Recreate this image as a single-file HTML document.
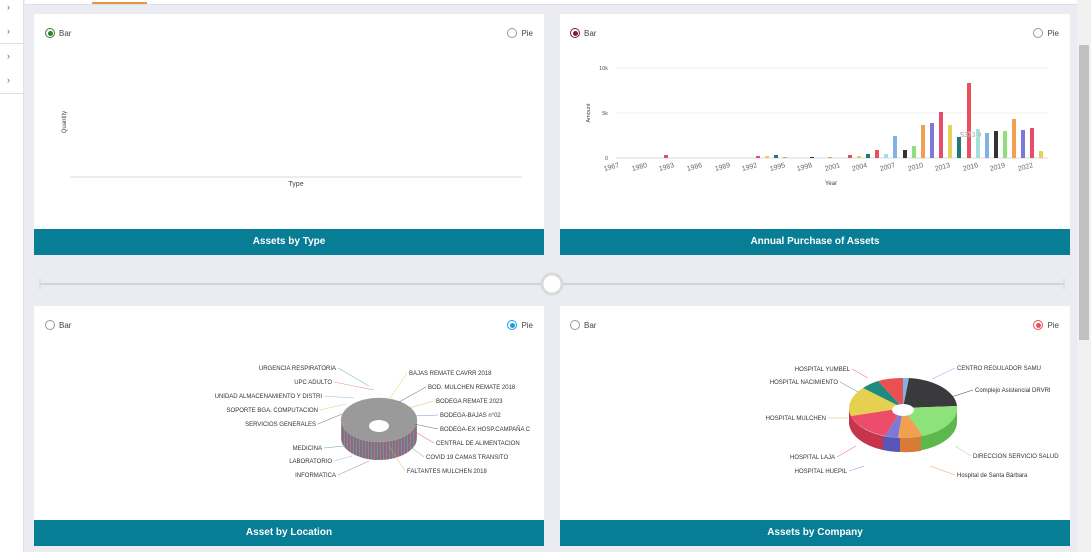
<!DOCTYPE html>
<html><head><meta charset="utf-8"><style>
*{margin:0;padding:0;box-sizing:border-box}
body{width:1091px;height:552px;overflow:hidden;background:#eaecf1;font-family:"Liberation Sans",sans-serif;position:relative}
.side{position:absolute;left:0;top:0;width:24px;height:552px;background:#fff;border-right:1px solid #dde0e5}
.side div{position:absolute;left:7px;font-size:9px;color:#666}
.top{position:absolute;left:25px;top:0;width:1052px;height:5px;background:#fff;border-bottom:1px solid #dde}
.top i{position:absolute;left:67px;top:2px;width:55px;height:2px;background:#e8963f}
.card{position:absolute;background:#fff;width:510px}
.hdr{position:absolute;left:0;bottom:0;width:100%;height:26px;background:#077d96;color:#fff;font-size:10px;font-weight:bold;text-align:center;line-height:26px}
.rad{position:absolute;top:14px;font-size:8px;color:#444;display:flex;align-items:center}
.rad b{display:inline-block;width:10px;height:10px;border:1px solid #999;border-radius:50%;margin-right:4px;position:relative}
.rad b.on:after{content:"";position:absolute;left:1.5px;top:1.5px;width:5px;height:5px;border-radius:50%;background:var(--c)}
.sb{position:absolute;left:1077px;top:0;width:14px;height:552px;background:#f1f1f1}
.sb i{position:absolute;left:2px;top:45px;width:10px;height:295px;background:#c1c1c1}
svg text{font-family:"Liberation Sans",sans-serif}
</style></head><body>
<div class="side"><div style="top:2px">›</div><div style="top:26px">›</div><div style="top:51px">›</div><div style="top:75px">›</div>
<div style="left:0;top:43px;width:24px;height:1px;background:#ddd"></div><div style="left:0;top:93px;width:24px;height:1px;background:#ddd"></div></div>
<div class="top"><i></i></div>
<div class="sb"><i></i></div>

<div class="card" style="left:34px;top:14px;height:241px">
<div class="rad" style="left:11px"><b class="on" style="--c:#2e7d32;border-color:#2e7d32"></b>Bar</div>
<div class="rad" style="right:11px"><b></b>Pie</div>
<svg width="510" height="215" style="position:absolute;left:0;top:0">
<line x1="36" y1="163" x2="488" y2="163" stroke="#ccc" stroke-width="0.7"/>
<text x="262" y="172" font-size="7" fill="#444" text-anchor="middle">Type</text>
<text transform="translate(32,108) rotate(-90)" font-size="6" fill="#444" text-anchor="middle">Quantity</text>
</svg>
<div class="hdr">Assets by Type</div></div>

<div class="card" style="left:560px;top:14px;height:241px">
<div class="rad" style="left:10px"><b class="on" style="--c:#7b1d3a;border-color:#7b1d3a"></b>Bar</div>
<div class="rad" style="right:11px"><b></b>Pie</div>
<svg width="512" height="215" style="position:absolute;left:0;top:0">
<g stroke="#eee" stroke-width="0.7"><line x1="56" y1="54" x2="488" y2="54"/><line x1="56" y1="99" x2="488" y2="99"/></g>
<line x1="56" y1="144" x2="488" y2="144" stroke="#ccc" stroke-width="0.7"/>
<g font-size="5.5" fill="#555" text-anchor="end"><text x="48" y="56">10k</text><text x="48" y="101">5k</text><text x="48" y="146">0</text></g>
<text transform="translate(30,99) rotate(-90)" font-size="5.5" fill="#444" text-anchor="middle">Amount</text>
<text x="271" y="171" font-size="6" fill="#444" text-anchor="middle">Year</text>
<g font-size="7" fill="#666" text-anchor="middle">
<text transform="translate(52,155) rotate(-15)">1967</text><text transform="translate(80,155) rotate(-15)">1980</text><text transform="translate(107,155) rotate(-15)">1983</text><text transform="translate(135,155) rotate(-15)">1986</text><text transform="translate(163,155) rotate(-15)">1989</text><text transform="translate(190,155) rotate(-15)">1992</text><text transform="translate(218,155) rotate(-15)">1995</text><text transform="translate(245,155) rotate(-15)">1998</text><text transform="translate(273,155) rotate(-15)">2001</text><text transform="translate(300,155) rotate(-15)">2004</text><text transform="translate(328,155) rotate(-15)">2007</text><text transform="translate(356,155) rotate(-15)">2010</text><text transform="translate(383,155) rotate(-15)">2013</text><text transform="translate(411,155) rotate(-15)">2016</text><text transform="translate(438,155) rotate(-15)">2019</text><text transform="translate(466,155) rotate(-15)">2022</text>
</g>
<g>
<rect x="104" y="141" width="4" height="3" fill="#e54d6b"/>
<rect x="196" y="142" width="4" height="2" fill="#e54d6b"/>
<rect x="205" y="142" width="4" height="2" fill="#e5d05a"/>
<rect x="214" y="141" width="4" height="3" fill="#1f7a76"/>
<rect x="223" y="143" width="4" height="1" fill="#aaa"/>
<rect x="250" y="143" width="4" height="1" fill="#333"/>
<rect x="268" y="143" width="4" height="1" fill="#e59a5a"/>
<rect x="288" y="141" width="4" height="3" fill="#e54d6b"/>
<rect x="297" y="142" width="4" height="2" fill="#e5d05a"/>
<rect x="306" y="140" width="4" height="4" fill="#1f7a76"/>
<rect x="315" y="136" width="4" height="8" fill="#e8505b"/>
<rect x="324" y="140" width="4" height="4" fill="#9fe3da"/>
<rect x="333" y="122" width="4" height="22" fill="#7fb3e6"/>
<rect x="343" y="136" width="4" height="8" fill="#333"/>
<rect x="352" y="132" width="4" height="12" fill="#8fe07a"/>
<rect x="361" y="111" width="4" height="33" fill="#f0a050"/>
<rect x="370" y="109" width="4" height="35" fill="#7c7ad8"/>
<rect x="379" y="98" width="4" height="46" fill="#e54d6b"/>
<rect x="388" y="111" width="4" height="33" fill="#e5d05a"/>
<rect x="397" y="123" width="4" height="21" fill="#1f7a76"/>
<rect x="407" y="69" width="4" height="75" fill="#e8505b"/>
<rect x="416" y="115" width="4" height="29" fill="#9fe3da"/>
<rect x="425" y="119" width="4" height="25" fill="#7fb3e6"/>
<rect x="434" y="117" width="4" height="27" fill="#333"/>
<rect x="443" y="117" width="4" height="27" fill="#8fe07a"/>
<rect x="452" y="105" width="4" height="39" fill="#f0a050"/>
<rect x="461" y="116" width="4" height="28" fill="#7c7ad8"/>
<rect x="470" y="114" width="4" height="30" fill="#e54d6b"/>
<rect x="479" y="137" width="4" height="7" fill="#e5d05a"/>
</g>
<text x="400" y="123" font-size="7" fill="#333" stroke="#fff" stroke-width="0.3">$373.0</text>
</svg>
<div class="hdr">Annual Purchase of Assets</div></div>

<svg width="1040" height="30" style="position:absolute;left:34px;top:270px">
<line x1="6" y1="14" x2="1030" y2="14" stroke="#d2d4d8" stroke-width="2"/>
<line x1="6" y1="8" x2="6" y2="20" stroke="#d2d4d8"/><line x1="1030" y1="8" x2="1030" y2="20" stroke="#d2d4d8"/>
<circle cx="518" cy="14" r="10" fill="#fff" stroke="#d8dadd" stroke-width="3"/>
</svg>

<div class="card" style="left:34px;top:306px;height:240px">
<div class="rad" style="left:11px"><b></b>Bar</div>
<div class="rad" style="right:11px"><b class="on" style="--c:#1a9fd8;border-color:#1a9fd8"></b>Pie</div>
<svg width="510" height="214" style="position:absolute;left:0;top:0">
<defs><pattern id="st" width="3" height="10" patternUnits="userSpaceOnUse"><rect width="3" height="10" fill="#8a8a8a"/><rect width="1" height="10" fill="#6b7a9a"/><rect x="2" width="1" height="10" fill="#a06070"/></pattern></defs>
<path d="M307 114 A38 22 0 0 0 383 114 L383 132 A38 22 0 0 1 307 132 Z" fill="url(#st)"/>
<ellipse cx="345" cy="114" rx="38" ry="22" fill="#9a9a9a"/>
<ellipse cx="345" cy="114" rx="38" ry="22" fill="none" stroke="#a8a0a0" stroke-width="0.5"/>
<ellipse cx="345" cy="120" rx="10" ry="6" fill="#fff"/>
<g font-size="6" fill="#333" text-anchor="end">
<text x="302" y="64">URGENCIA RESPIRATORIA</text><text x="298" y="78">UPC ADULTO</text><text x="288" y="92">UNIDAD ALMACENAMIENTO Y DISTRI</text><text x="284" y="106">SOPORTE BGA. COMPUTACION</text><text x="282" y="120">SERVICIOS GENERALES</text><text x="288" y="144">MEDICINA</text><text x="298" y="157">LABORATORIO</text><text x="302" y="171">INFORMATICA</text></g>
<g font-size="6" fill="#333"><text x="375" y="69">BAJAS REMATE CAVRR 2018</text><text x="394" y="83">BOD. MULCHEN REMATE 2018</text><text x="402" y="97">BODEGA REMATE 2023</text><text x="406" y="111">BODEGA-BAJAS n°02</text><text x="406" y="125">BODEGA-EX HOSP.CAMPAÑA C</text><text x="402" y="139">CENTRAL DE ALIMENTACION</text><text x="392" y="153">COVID 19 CAMAS TRANSITO</text><text x="373" y="167">FALTANTES MULCHEN 2018</text></g>
<g stroke-width="0.5" fill="none">
<path d="M304 62 L335 80" stroke="#5a9"/><path d="M300 76 L340 84" stroke="#e88"/><path d="M290 90 L320 92" stroke="#9bd"/><path d="M286 104 L312 98" stroke="#ad8"/><path d="M284 118 L308 108" stroke="#668"/><path d="M290 142 L310 140" stroke="#5a9"/><path d="M300 155 L318 150" stroke="#9bd"/><path d="M304 169 L335 155" stroke="#888"/>
<path d="M373 67 L355 94" stroke="#bd5"/><path d="M392 81 L365 96" stroke="#558"/><path d="M400 95 L375 102" stroke="#db5"/><path d="M404 109 L380 110" stroke="#88d"/><path d="M404 123 L380 118" stroke="#668"/><path d="M400 137 L378 124" stroke="#d55"/><path d="M390 151 L370 136" stroke="#5a9"/><path d="M371 165 L355 140" stroke="#db5"/></g>
</svg>
<div class="hdr">Asset by Location</div></div>

<div class="card" style="left:560px;top:306px;height:240px">
<div class="rad" style="left:10px"><b></b>Bar</div>
<div class="rad" style="right:11px"><b class="on" style="--c:#e8505b;border-color:#e8505b"></b>Pie</div>
<svg width="512" height="214" style="position:absolute;left:0;top:0">
<g transform="translate(343,102)">
<path d="M-54 0 A54 30 0 0 0 54 0 L54 14 A54 30 0 0 1 -54 14 Z" fill="#5cb84a"/>
<path d="M-54 0 A54 30 0 0 0 -20 28 L-20 42 A54 30 0 0 1 -54 14 Z" fill="#c8344e"/>
<path d="M-20 28 A54 30 0 0 0 -3 30 L-3 44 A54 30 0 0 1 -20 42Z" fill="#5a55b8"/>
<path d="M-3 30 A54 30 0 0 0 18 29 L18 43 A54 30 0 0 1 -3 44Z" fill="#d87b38"/>
<path d="M0 0 L0 -30 A54 30 0 0 1 6 -30 Z" fill="#7fb3e6"/>
<path d="M0 0 L6 -30 A54 30 0 0 1 54 -2 Z" fill="#3a3a3c"/>
<path d="M0 0 L54 -2 A54 30 0 0 1 20 28 Z" fill="#8ee27a"/>
<path d="M0 0 L20 28 A54 30 0 0 1 -5 30 Z" fill="#f0a050"/>
<path d="M0 0 L-5 30 A54 30 0 0 1 -18 28 Z" fill="#7c7ad8"/>
<path d="M0 0 L-18 28 A54 30 0 0 1 -52 8 Z" fill="#ec4d6b"/>
<path d="M0 0 L-52 8 A54 30 0 0 1 -40 -20 Z" fill="#e5d050"/>
<path d="M0 0 L-40 -20 A54 30 0 0 1 -25 -27 Z" fill="#1f8a7e"/>
<path d="M0 0 L-25 -27 A54 30 0 0 1 0 -30 Z" fill="#ea5050"/>
<ellipse cx="0" cy="2" rx="11" ry="6" fill="#fff"/>
</g>
<g font-size="6" fill="#333" text-anchor="end"><text x="290" y="65">HOSPITAL YUMBEL</text><text x="278" y="78">HOSPITAL NACIMIENTO</text><text x="266" y="114">HOSPITAL MULCHEN</text><text x="275" y="153">HOSPITAL LAJA</text><text x="287" y="167">HOSPITAL HUEPIL</text></g>
<g font-size="6" fill="#333"><text x="397" y="64">CENTRO REGULADOR SAMU</text><text x="415" y="86">Complejo Asistencial DRVRI</text><text x="413" y="152">DIRECCION SERVICIO SALUD</text><text x="397" y="171">Hospital de Santa Bárbara</text></g>
<g stroke-width="0.5" fill="none"><path d="M292 63 L308 72" stroke="#e55"/><path d="M280 76 L298 86" stroke="#488"/><path d="M268 112 L288 112" stroke="#db5"/><path d="M277 151 L296 140" stroke="#e55"/><path d="M289 165 L304 160" stroke="#88d"/><path d="M395 62 L372 73" stroke="#7ae"/><path d="M413 84 L388 92" stroke="#333"/><path d="M411 150 L395 140" stroke="#8d7"/><path d="M395 169 L370 160" stroke="#e95"/></g>
</svg>
<div class="hdr">Assets by Company</div></div>
</body></html>
